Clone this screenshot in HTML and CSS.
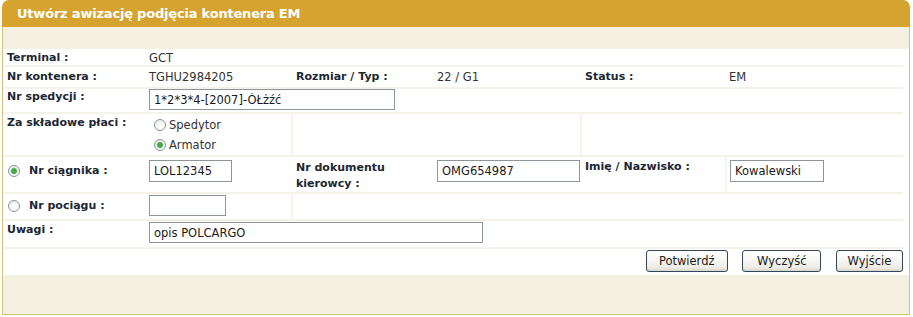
FILE: index.html
```html
<!DOCTYPE html>
<html lang="pl">
<head>
<meta charset="utf-8">
<title>Utwórz awizację podjęcia kontenera EM</title>
<link rel="stylesheet" href="styles.css">
</head>
<body>
<div class="panel">
  <div class="panel-header">Utwórz awizację podjęcia kontenera EM</div>
  <div class="panel-body">
    <div class="band band-top"></div>
    <table class="form">
      <colgroup>
        <col class="c1"><col class="c2"><col class="c3"><col class="c4"><col class="c5"><col class="c6">
      </colgroup>
      <tr class="r1">
        <td class="lbl">Terminal :</td>
        <td class="val">GCT</td>
        <td colspan="4"></td>
      </tr>
      <tr class="r2">
        <td class="lbl">Nr kontenera :</td>
        <td class="val">TGHU2984205</td>
        <td class="lbl">Rozmiar / Typ :</td>
        <td class="val">22 / G1</td>
        <td class="lbl">Status :</td>
        <td class="val">EM</td>
      </tr>
      <tr class="r3">
        <td class="lbl">Nr spedycji :</td>
        <td colspan="5"><input class="txt w-sped" type="text" value="1*2*3*4-[2007]-ÓŁżźć"></td>
      </tr>
      <tr class="r4">
        <td class="lbl">Za składowe płaci :</td>
        <td class="val radios">
          <label class="opt"><input type="radio" name="payer" class="rb"><span>Spedytor</span></label>
          <label class="opt"><input type="radio" name="payer" class="rb" checked><span>Armator</span></label>
        </td>
        <td colspan="2" class="vsep"></td>
        <td colspan="2" class="vsep"></td>
      </tr>
      <tr class="r5">
        <td class="lbl"><label class="opt-lbl"><input type="radio" name="mode" class="rb" checked><span>Nr ciągnika :</span></label></td>
        <td><input class="txt w-cia" type="text" value="LOL12345"></td>
        <td class="lbl two">Nr dokumentu kierowcy :</td>
        <td><input class="txt w-dok" type="text" value="OMG654987"></td>
        <td class="lbl top">Imię / Nazwisko :</td>
        <td class="vsep"><input class="txt w-imie" type="text" value="Kowalewski"></td>
      </tr>
      <tr class="r6">
        <td class="lbl"><label class="opt-lbl"><input type="radio" name="mode" class="rb"><span>Nr pociągu :</span></label></td>
        <td><input class="txt w-poc" type="text" value=""></td>
        <td colspan="4" class="vsep"></td>
      </tr>
      <tr class="r7">
        <td class="lbl">Uwagi :</td>
        <td colspan="5"><input class="txt w-uwagi" type="text" value="opis POLCARGO"></td>
      </tr>
      <tr class="r8">
        <td colspan="6" class="actions">
          <button class="btn b1" type="button">Potwierdź</button>
          <button class="btn b2" type="button">Wyczyść</button>
          <button class="btn b3" type="button">Wyjście</button>
        </td>
      </tr>
    </table>
    <div class="band band-bottom"></div>
  </div>
</div>
</body>
</html>
```
FILE: styles.css
```css
html, body {
  margin: 0;
  padding: 0;
  background: #ffffff;
}

body {
  font-family: "DejaVu Sans", Verdana, sans-serif;
  font-size: 11.5px;
  color: #333333;
}

.panel {
  margin-left: 2px;
  width: 908px;
}

.panel-header {
  height: 27px;
  line-height: 27px;
  background: #d6a32f;
  border-radius: 7px 7px 0 0;
  color: #ffffff;
  font-weight: bold;
  font-size: 13px;
  letter-spacing: -0.2px;
  padding-left: 15px;
}

.panel-body {
  border: 1px solid #d5c27d;
  border-top: none;
  background: #ffffff;
}

.band {
  background: #f4f1e3;
}

.band-top {
  height: 22px;
}

.band-bottom {
  height: 39px;
}

.form {
  width: 900px;
  border-collapse: collapse;
  table-layout: fixed;
}

.c1 { width: 143px; }
.c2 { width: 146px; }
.c3 { width: 142px; }
.c4 { width: 147px; }
.c5 { width: 145px; }
.c6 { width: 177px; }

.form td {
  vertical-align: top;
  padding: 0 3px;
  line-height: 14px;
  border-top: 2px solid #f4f2e9;
}

.form tr.r1 { height: 16px; }
.form tr.r2 { height: 22px; }
.form tr.r3 { height: 25px; }
.form tr.r4 { height: 43px; }
.form tr.r5 { height: 37px; }
.form tr.r6 { height: 27px; }
.form tr.r7 { height: 28px; }
.form tr.r8 { height: 27px; }

.form tr.r1 td { border-top: none; padding-top: 2px; }
.form tr.r2 td { padding-top: 3px; }
.form tr.r3 td { padding-top: 0; }
.form tr.r4 td { padding-top: 1px; }
.form tr.r5 td { padding-top: 3px; }
.form tr.r6 td { padding-top: 1px; }
.form tr.r7 td { padding-top: 1px; }
.form tr.r8 td { padding-top: 1px; }

.form td.lbl {
  font-weight: bold;
  font-size: 11px;
  color: #1c2733;
  padding-left: 4px;
}

.form tr.r3 td.lbl { padding-top: 1px; }
.form tr.r4 td.lbl { padding-top: 2px; }
.form tr.r5 td.lbl { padding-top: 7px; }
.form tr.r5 td.lbl.two { padding-top: 3px; line-height: 16px; }
.form tr.r5 td.lbl.top { padding-top: 3px; }
.form tr.r6 td.lbl { padding-top: 5px; }
.form tr.r7 td.lbl { padding-top: 2px; }

.form td.val {
  color: #333333;
}

.vsep {
  border-left: 2px solid #f6f4ec;
}

.radios {
  padding-left: 8px !important;
}

.opt {
  display: flex;
  align-items: center;
  height: 20px;
  gap: 3px;
  color: #333333;
}

.opt-lbl {
  display: flex;
  align-items: center;
  gap: 9px;
  padding-left: 1px;
}

.rb {
  appearance: none;
  -webkit-appearance: none;
  width: 12px;
  height: 12px;
  margin: 0;
  border: 1px solid #8a96a2;
  border-radius: 50%;
  background: radial-gradient(circle at 60% 65%, #ffffff 0, #f3f3f0 55%, #dcdcd6 100%);
  flex: none;
}

.rb:checked {
  background:
    radial-gradient(circle at 50% 50%, #4fb04f 0, #3da33d 2.4px, #bfe3bf 3.2px, transparent 3.8px),
    radial-gradient(circle at 60% 65%, #ffffff 0, #f3f3f0 55%, #dcdcd6 100%);
}

.txt {
  box-sizing: border-box;
  height: 21px;
  margin: 0;
  padding: 0 4px;
  border: 1px solid #8c949c;
  background: #ffffff;
  font-family: "DejaVu Sans", Verdana, sans-serif;
  font-size: 11.5px;
  color: #1a1a1a;
  outline: none;
  display: block;
}

.r5 .txt {
  height: 22px;
}

.w-sped { width: 246px; }
.w-cia { width: 83px; }
.w-dok { width: 143px; }
.w-imie { width: 94px; }
.w-poc { width: 77px; }
.w-uwagi { width: 334px; }

.actions {
  text-align: right;
  padding-right: 0 !important;
}

.actions .btn + .btn {
  margin-left: 11px;
}

.btn {
  box-sizing: border-box;
  height: 22px;
  margin: 0;
  border: 1px solid #33475b;
  border-radius: 3px;
  background: linear-gradient(#ffffff 0%, #f7f7f4 45%, #ecebe4 85%, #d8d4c8 100%);
  font-family: "DejaVu Sans", Verdana, sans-serif;
  font-size: 11.5px;
  color: #1a1a1a;
  padding: 0;
}

.b1 { width: 82px; }
.b2 { width: 79px; }
.b3 { width: 67px; }
```
